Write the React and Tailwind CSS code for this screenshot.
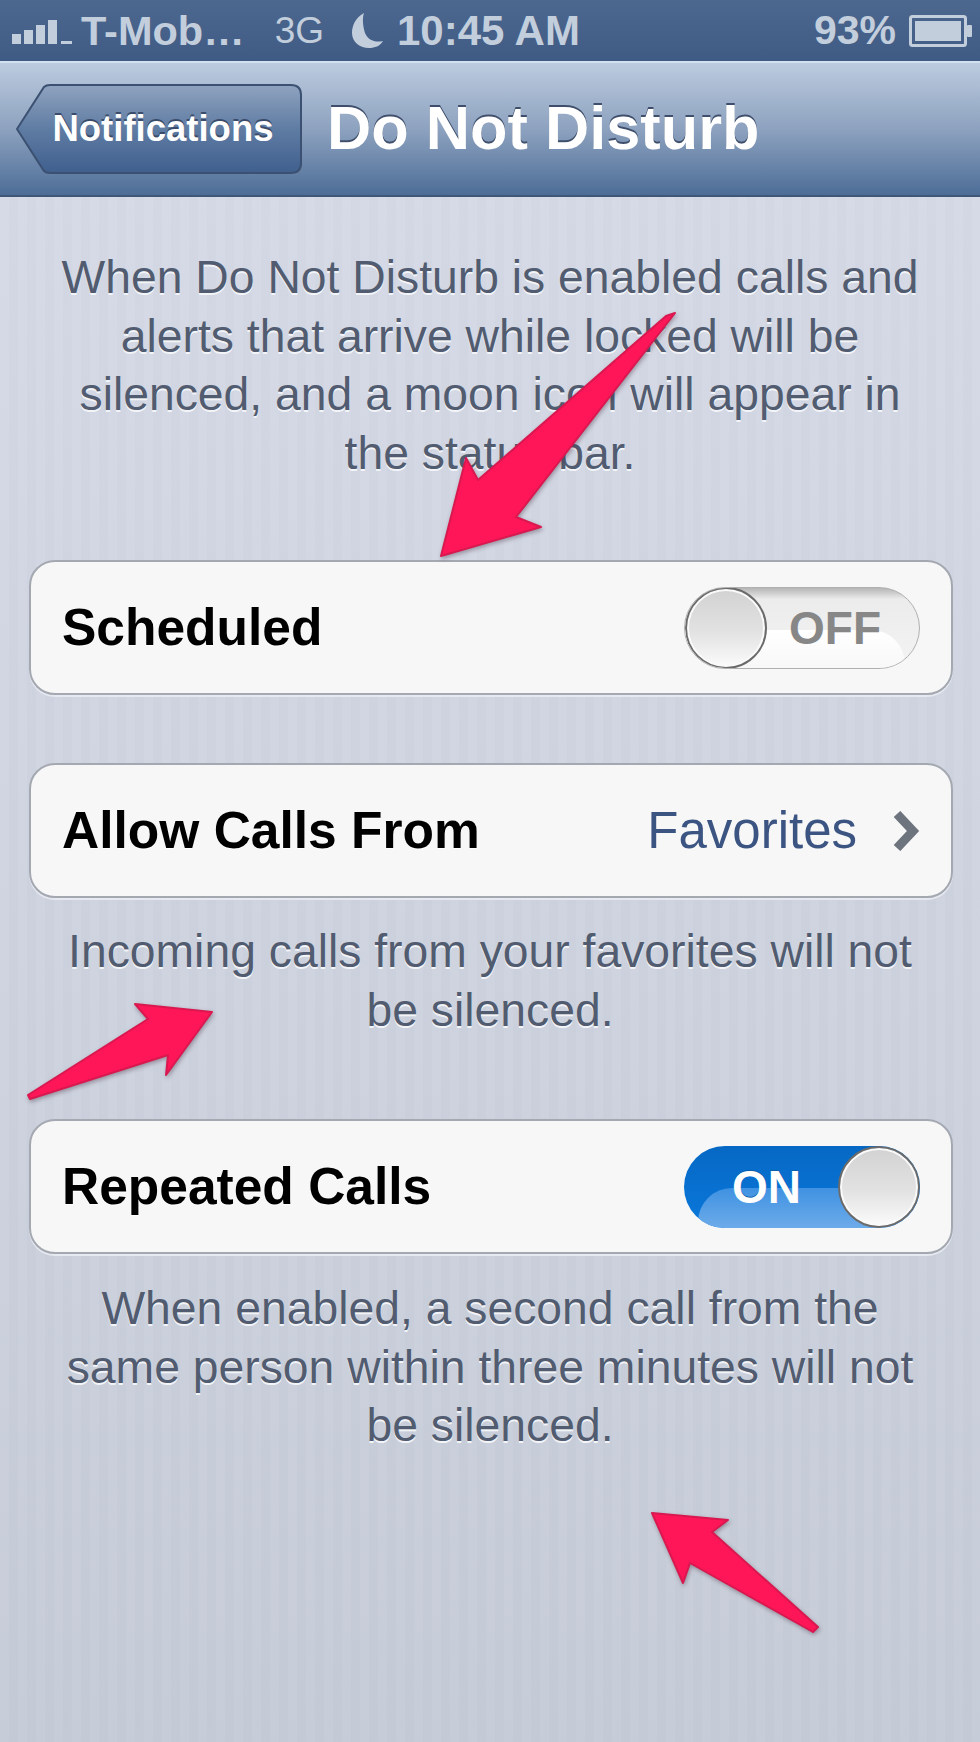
import React from 'react';

const SANS = "font-['Liberation_Sans',Arial,sans-serif]";

const SignalBars = () => (
  <svg width="62" height="26" viewBox="0 0 62 26" className="shrink-0" fill="#c3cedd">
    <rect x="0" y="16" width="9" height="10" />
    <rect x="12" y="12" width="9" height="14" />
    <rect x="24" y="7" width="9" height="19" />
    <rect x="36" y="2" width="9" height="24" />
    <rect x="49" y="23" width="11" height="3" />
  </svg>
);

const Moon = () => (
  <svg width="32" height="35" viewBox="0 0 32 35" className="shrink-0" fill="#c3cedd">
    <path d="M12 0 C3 5 0 13 0 20 C0 29 8 35 17 35 C23 35 28 33 31 28 C23 30 16 27 13 20 C11 13 10 6 12 0 Z" />
  </svg>
);

const Battery = () => (
  <svg width="64" height="32" viewBox="0 0 64 32" className="shrink-0">
    <rect x="1.5" y="1.5" width="55" height="29" rx="2" fill="none" stroke="#c3cedd" strokeWidth="3" />
    <rect x="6" y="6" width="46" height="20" fill="#c3cedd" />
    <rect x="58" y="10" width="5" height="12" rx="1" fill="#c3cedd" />
  </svg>
);

const StatusBar = () => (
  <div className="h-[61px] flex items-center pl-[12px] pr-[7px] bg-[linear-gradient(#4d688f,#3f5b84)] text-[#c3cedd] font-bold text-[41px] leading-none">
    <SignalBars />
    <span className="ml-[7px] text-[41.5px]">T-Mob…</span>
    <span className="ml-[30px] text-[37px] font-normal">3G</span>
    <span className="ml-[28px]"><Moon /></span>
    <span className="ml-[13px] text-[42px]">10:45 AM</span>
    <span className="ml-auto mr-[13px]">93%</span>
    <Battery />
  </div>
);

const BackButton = () => (
  <div className="relative w-[286px] h-[90px] flex items-center justify-center pl-[27px] pr-[19px]">
    <svg className="absolute inset-0" width="286" height="90" viewBox="0 0 286 90">
      <defs>
        <linearGradient id="backFill" x1="0" y1="0" x2="0" y2="1">
          <stop offset="0" stopColor="#8fa3bf" />
          <stop offset="0.5" stopColor="#5f7ca3" />
          <stop offset="1" stopColor="#3f5f8d" />
        </linearGradient>
      </defs>
      <path
        d="M1 45 L28 3 Q30 1 34 1 L275 1 Q285 1 285 11 L285 79 Q285 89 275 89 L34 89 Q30 89 28 87 Z"
        fill="url(#backFill)"
        stroke="#3c5171"
        strokeWidth="2"
      />
    </svg>
    <span className="relative text-white font-bold text-[36.5px] leading-none [text-shadow:0_-2px_0_#3a4c69]">Notifications</span>
  </div>
);

const NavBar = () => (
  <div className="h-[136px] flex items-center pl-[16px] border-t-[2px] border-t-[#d2e0f0] border-b-[2px] border-b-[#3f5678] bg-[linear-gradient(#bccbdf,#8da2bf_50%,#4d6d97)]">
    <BackButton />
    <h1 className="ml-[25px] text-white font-bold text-[61.3px] leading-none [text-shadow:0_-2px_0_#3f4f6b]">Do Not Disturb</h1>
  </div>
);

const Card = ({ children, className = '' }) => (
  <div className={`ml-[29px] mr-[27px] h-[135px] flex items-center justify-between pl-[31px] pr-[31px] rounded-[26px] border-[2px] border-[#a4a8b1] bg-[#f7f7f7] shadow-[0_2px_0_#e6e9f0] ${className}`}>
    {children}
  </div>
);

const Label = ({ children }) => (
  <span className="pt-[1px] text-black font-bold text-[51.5px] leading-none [text-shadow:0_1px_0_#fff]">{children}</span>
);

const Footnote = ({ children, className = '' }) => (
  <p className={`text-center text-[#525c70] text-[46.3px] leading-[58.5px] [text-shadow:0_2px_0_#f2f4f8] ${className}`}>{children}</p>
);

const Knob = ({ className = '' }) => (
  <div className={`relative w-[82px] h-[82px] shrink-0 rounded-full border-[2px] border-[#6b6b6b] bg-[linear-gradient(#d2d2d2,#e2e2e2_55%,#fbfbfb)] shadow-[inset_0_0_0_2px_#fafafa] ${className}`} />
);

const ToggleOff = () => (
  <div className="relative w-[236px] h-[82px] flex items-center overflow-hidden rounded-full border-[1px] border-[#b0b0b0] bg-[linear-gradient(#b5b5b5,#ececec_14%,#f3f3f3)]">
    <div className="absolute left-0 right-[14px] top-[42px] bottom-0 rounded-tr-[34px] bg-[linear-gradient(#ffffff,#f8f8f8)]" />
    <Knob />
    <span className="relative ml-[22px] text-[#878787] font-bold text-[46px] leading-none">OFF</span>
  </div>
);

const ToggleOn = () => (
  <div className="relative w-[236px] h-[82px] flex items-center justify-end overflow-hidden rounded-full bg-[linear-gradient(#0668c4,#0a78dc)]">
    <div className="absolute left-[14px] right-0 top-[42px] bottom-0 rounded-tl-[34px] bg-[linear-gradient(#3f92e2,#6dabea)]" />
    <span className="relative mr-[37px] text-white font-bold text-[46px] leading-none [text-shadow:0_-1px_0_#0b5cab]">ON</span>
    <Knob />
  </div>
);

const Chevron = () => (
  <svg width="28" height="40" viewBox="0 0 28 40" className="shrink-0 ml-[35px]" fill="none" stroke="#6e747e" strokeWidth="9">
    <path d="M5 3 L21 20 L5 37" />
  </svg>
);

// annotation arrows drawn over the page
const ARROWS = [
  '675,313 666,316 478,480 466,458 441,556 541,527 516,517',
  '28,1095 30,1099 168,1055 166,1075 212,1012 135,1004 148,1019',
  '652,1513 728,1520 712,1532 818,1627 813,1632 690,1563 683,1583',
];

const Arrows = () => (
  <svg className="absolute inset-0 pointer-events-none" width="980" height="1742" viewBox="0 0 980 1742">
    {ARROWS.map((points) => (
      <polygon
        key={points}
        points={points}
        fill="#ff1659"
        stroke="#d9184f"
        strokeWidth="2"
        strokeLinejoin="round"
        className="drop-shadow-[1px_2px_2px_rgba(70,40,60,0.4)]"
      />
    ))}
  </svg>
);

export default function App() {
  return (
    <div className={`relative w-[980px] h-[1742px] overflow-hidden ${SANS} bg-[repeating-linear-gradient(90deg,rgba(255,255,255,0.035)_0,rgba(255,255,255,0.035)_9px,rgba(0,0,0,0.008)_9px,rgba(0,0,0,0.008)_18px),linear-gradient(#d6dbe7,#c5cbd7)]`}>
      <StatusBar />
      <NavBar />
      <main>
        <Footnote className="pt-[51px]">
          When Do Not Disturb is enabled calls and<br />
          alerts that arrive while locked will be<br />
          silenced, and a moon icon will appear in<br />
          the status bar.
        </Footnote>

        <Card className="mt-[78px]">
          <Label>Scheduled</Label>
          <ToggleOff />
        </Card>

        <Card className="mt-[68px]">
          <Label>Allow Calls From</Label>
          <div className="flex items-center">
            <span className="text-[#3b5482] text-[51px] leading-none">Favorites</span>
            <Chevron />
          </div>
        </Card>
        <Footnote className="mt-[24px]">
          Incoming calls from your favorites will not<br />
          be silenced.
        </Footnote>

        <Card className="mt-[80px]">
          <Label>Repeated Calls</Label>
          <ToggleOn />
        </Card>
        <Footnote className="mt-[25px]">
          When enabled, a second call from the<br />
          same person within three minutes will not<br />
          be silenced.
        </Footnote>
      </main>
      <Arrows />
    </div>
  );
}
